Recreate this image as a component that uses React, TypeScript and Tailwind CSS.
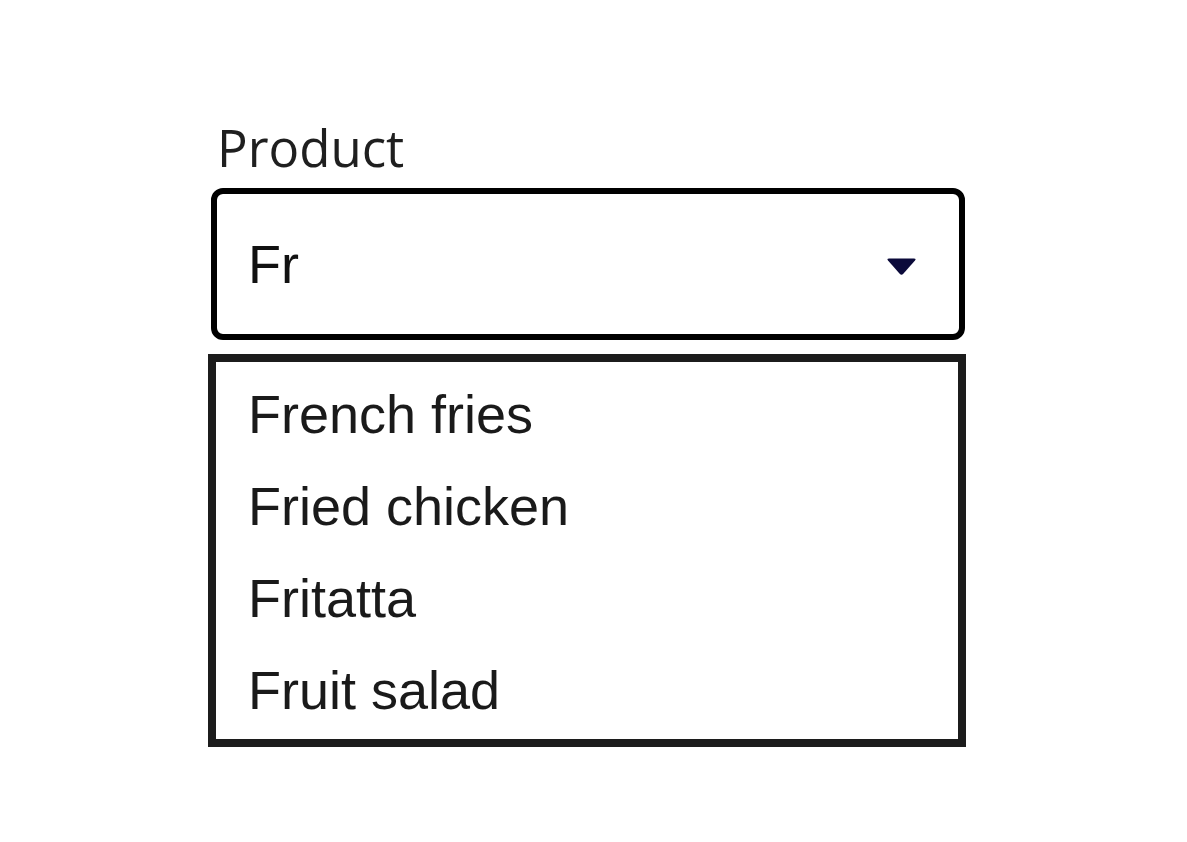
import { useState } from "react";

const options = ["French fries", "Fried chicken", "Fritatta", "Fruit salad"];

export default function App() {
  const [query, setQuery] = useState("Fr");

  const matches = options.filter((o) => o.toLowerCase().startsWith(query.toLowerCase()));

  return (
    <div className="min-h-screen bg-white">
      <div className="ml-[208px] flex w-[758px] flex-col pt-[113px]">
        <label
          htmlFor="product"
          className="pl-[9px] text-[51px] leading-[68px] text-[#1f1f1f]"
          style={{ fontFamily: '"Open Sans", "Noto Sans", sans-serif' }}
        >
          Product
        </label>
        <div className="mt-[7px] ml-[3px] flex h-[152px] w-[754px] items-center rounded-[12px] border-[6px] border-black pr-[42px] pl-[31px]">
          <input
            id="product"
            value={query}
            onChange={(e) => setQuery(e.target.value)}
            className="w-full min-w-0 flex-1 bg-transparent text-[54px] text-[#111] outline-none"
            style={{ fontFamily: '"Liberation Sans", Arial, sans-serif' }}
          />
          <svg width="31" height="19" viewBox="0 0 31 19" className="mt-[4px] ml-4 shrink-0">
            <path
              d="M3 1.5 H28 Q30.5 1.5 29 3.5 L17.3 16.8 Q15.5 18.6 13.7 16.8 L2 3.5 Q0.5 1.5 3 1.5 Z"
              fill="#0b0a3a"
            />
          </svg>
        </div>
        <ul
          className="mt-[14px] border-[8px] border-[#1c1c1c] pt-[6px] pb-[3px] pl-[32px]"
          style={{ fontFamily: '"Liberation Sans", Arial, sans-serif' }}
        >
          {matches.map((item) => (
            <li key={item} className="text-[54px] leading-[92px] text-[#1a1a1a]">
              {item}
            </li>
          ))}
        </ul>
      </div>
    </div>
  );
}
